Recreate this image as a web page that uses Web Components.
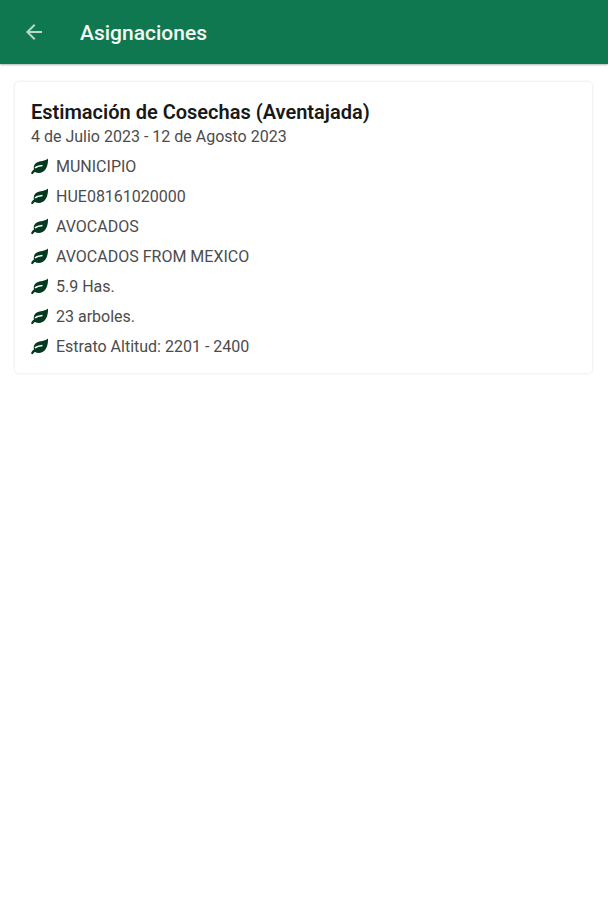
<!DOCTYPE html>
<html lang="es">
<head>
<meta charset="utf-8">
<title>Asignaciones</title>
<style>
body { margin: 0; background: #fff; font-family: Roboto, sans-serif; color: #4c4c4c; }
</style>
</head>
<body>
<app-bar>Asignaciones</app-bar>
<assignment-card>
<span slot="title">Estimación de Cosechas (Aventajada)</span>
<span slot="dates">4 de Julio 2023 - 12 de Agosto 2023</span>
<leaf-item>MUNICIPIO</leaf-item>
<leaf-item>HUE08161020000</leaf-item>
<leaf-item>AVOCADOS</leaf-item>
<leaf-item>AVOCADOS FROM MEXICO</leaf-item>
<leaf-item>5.9 Has.</leaf-item>
<leaf-item>23 arboles.</leaf-item>
<leaf-item>Estrato Altitud: 2201 - 2400</leaf-item>
</assignment-card>
<script>
function define(name, html) {
  customElements.define(name, class extends HTMLElement {
    constructor() {
      super();
      this.attachShadow({ mode: "open" }).innerHTML = html;
    }
  });
}
define("app-bar", `
<style>
:host { display: block; }
header { display: flex; align-items: center; gap: 32px; height: 64px; padding: 0 20px; background: #107850; color: #f4faf5; box-shadow: 0 1px 2px rgba(0,0,0,.3); }
button { display: flex; padding: 2px; border: 0; background: none; color: #b9dac8; }
h1 { margin: 0; padding-top: 2px; font-size: 21px; line-height: 24px; font-weight: 500; }
svg { display: block; }
</style>
<header>
<button type="button" aria-label="Volver"><svg width="24" height="24" viewBox="0 0 24 24" fill="currentColor"><path d="M20 11H7.83l5.59-5.59L12 4l-8 8 8 8 1.41-1.41L7.83 13H20z"/></svg></button>
<h1><slot></slot></h1>
</header>`);
define("assignment-card", `
<style>
:host { display: block; padding: 18px 16px 16px 15px; }
article { padding: 18px 16px 11px; border-radius: 4px; background: #fff; box-shadow: 0 0 3px rgba(0,0,0,.14); }
h2 { margin: 0; font-size: 20px; line-height: 24px; font-weight: 600; color: #181818; }
p { margin: 0 0 3px; font-size: 16px; line-height: 25px; }
</style>
<article>
<h2><slot name="title"></slot></h2>
<p><slot name="dates"></slot></p>
<div role="list"><slot></slot></div>
</article>`);
define("leaf-item", `
<style>
:host { display: flex; align-items: center; gap: 8px; height: 30px; font-size: 16px; line-height: 24px; }
svg { flex: none; }
</style>
<svg width="17" height="18" viewBox="0 0 17 18" aria-hidden="true"><path d="M17 .5C14 3.300 9 2.800 5.800 4.500C3.200 5.900 2.200 8.700 3 11.500C1.500 12.300.4 13.800 0 15.600L1.900 16.300C2.200 15.200 3 14.400 4 14C7.600 16 12 14.900 14.400 11.500C16.500 8.500 17.200 4.500 17 .5Z" fill="#04381f"/><path d="M4 10C5.700 8.500 8 7.900 11.500 7.500" fill="none" stroke="#fff" stroke-width="1.600"/></svg>
<span><slot></slot></span>`);
for (const item of document.querySelectorAll("leaf-item")) item.setAttribute("role", "listitem");
</script>
</body>
</html>
